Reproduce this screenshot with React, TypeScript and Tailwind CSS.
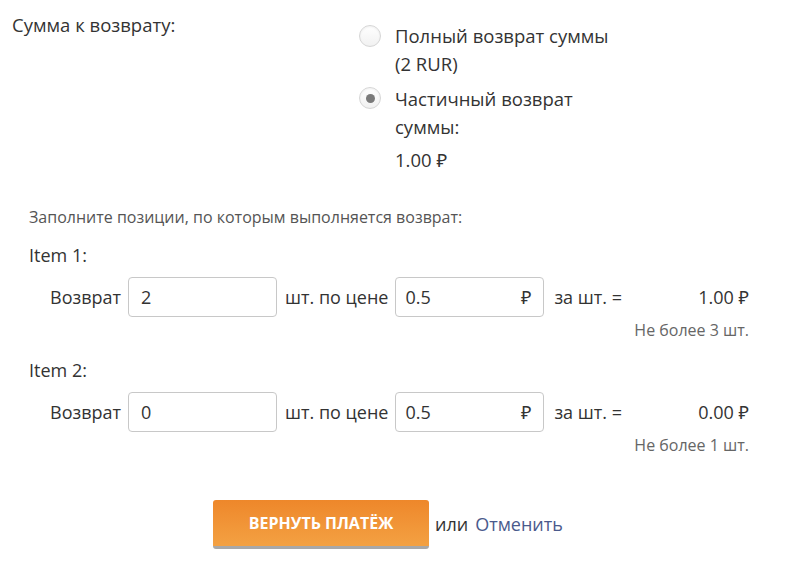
import React from "react"

const font = { fontFamily: '"Open Sans", "Noto Sans", sans-serif' }

function Radio({ checked }: { checked?: boolean }) {
  return (
    <span className="flex h-[22px] w-[22px] shrink-0 items-center justify-center rounded-full border border-[#d6d6d6] bg-gradient-to-b from-white to-[#f1f1f1] shadow-[inset_0_1px_2px_rgba(0,0,0,0.06)]">
      {checked && <span className="h-[9px] w-[9px] rounded-full bg-[#7a7a7a]" />}
    </span>
  )
}

function ItemRow({ title, qty, total, limit }: { title: string; qty: string; total: string; limit: string }) {
  return (
    <div className="flex flex-col">
      <div className="text-[18px] leading-[24px] text-[#333]">{title}</div>
      <div className="mt-[10px] flex items-center pl-[21px] text-[18px] text-[#333]">
        <span className="mr-[7px]">Возврат</span>
        <div className="flex h-[40px] w-[149px] items-center rounded-[4px] border border-[#c8c8c8] px-[12px]">{qty}</div>
        <span className="ml-[8px] mr-[7px]">шт. по цене</span>
        <div className="flex h-[40px] w-[149px] items-center justify-between rounded-[4px] border border-[#c8c8c8] pl-[9px] pr-[12px]">
          <span>0.5</span>
          <span>₽</span>
        </div>
        <span className="ml-[10px]">за шт. =</span>
        <span className="ml-auto">{total}</span>
      </div>
      <div className="mt-[3px] text-right text-[16px] leading-[20px] text-[#666]">{limit}</div>
    </div>
  )
}

export default function App() {
  return (
    <div className="min-h-[582px] w-[792px] bg-white" style={font}>
      {/* refund amount choice */}
      <div className="flex pt-[13px]">
        <div className="w-[359px] pl-[12px] text-[18.5px] leading-[24px] text-[#333]">Сумма к возврату:</div>
        <div className="flex flex-col pt-[9px] text-[18.5px] leading-[28px] text-[#333]">
          <label className="flex items-start gap-[14px]">
            <span className="mt-[3px]"><Radio /></span>
            <span className="w-[240px]">Полный возврат суммы<br />(2 RUR)</span>
          </label>
          <label className="mt-[7px] flex items-start gap-[14px]">
            <span className="mt-[2px]"><Radio checked /></span>
            <span className="w-[240px]">Частичный возврат<br />суммы:</span>
          </label>
          <div className="mt-[5px] pl-[36px]">1.00 ₽</div>
        </div>
      </div>

      {/* per-item refund */}
      <div className="mt-[33px] pl-[29px] pr-[43px]">
        <div className="text-[16px] leading-[20px] text-[#555]">Заполните позиции, по которым выполняется возврат:</div>
        <div className="mt-[16px] flex flex-col gap-[18px]">
          <ItemRow title="Item 1:" qty="2" total="1.00 ₽" limit="Не более 3 шт." />
          <ItemRow title="Item 2:" qty="0" total="0.00 ₽" limit="Не более 1 шт." />
        </div>
      </div>

      <div className="mt-[45px] flex items-center pl-[213px] text-[18px]">
        <button className="h-[49px] w-[216px] rounded-[3px] border-b-[3px] border-[#a8a8a8] bg-gradient-to-b from-[#ee872a] to-[#f3a142] text-[16px] font-bold uppercase text-white">
          Вернуть платёж
        </button>
        <span className="ml-[6px] text-[#333]">или</span>
        <a className="ml-[7px] text-[#4a5a8c]">Отменить</a>
      </div>
    </div>
  )
}
